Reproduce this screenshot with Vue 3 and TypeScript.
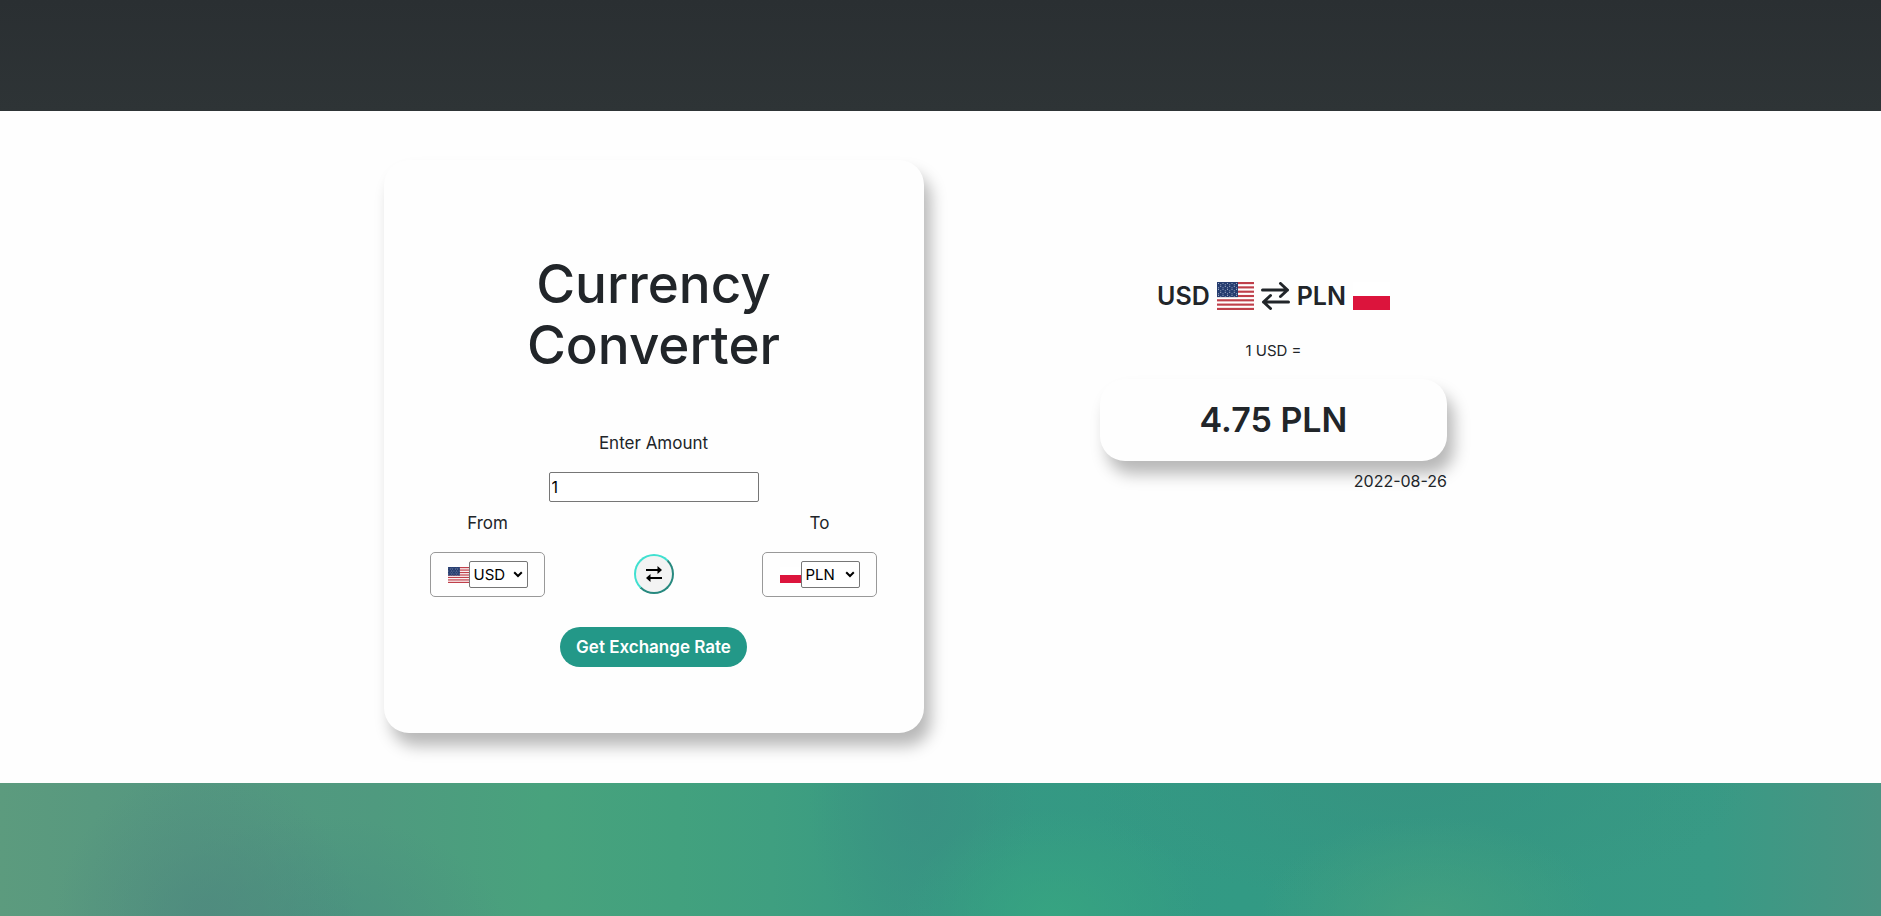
<script setup lang="ts">
import { computed, ref } from 'vue'

type Code = 'USD' | 'PLN'

const codes: Code[] = ['USD', 'PLN']
const rates: Record<Code, number> = { USD: 1, PLN: 4.75 }

const amount = ref('1')
const from = ref<Code>('USD')
const to = ref<Code>('PLN')
const result = ref('4.75 PLN')
const date = '2022-08-26'

const heading = computed(() => `${amount.value} ${from.value} =`)
const stripes = [0, 1, 2, 3, 4, 5, 6]
const stars = Array.from({ length: 45 }, (_, i) => ({
  x: 1.5 + (i % 9) * 2.25,
  y: 1.6 + Math.floor(i / 9) * 3 + (i % 2) * 1.2,
}))

function swap() {
  const previous = from.value
  from.value = to.value
  to.value = previous
}

function convert() {
  const value = (Number(amount.value) * rates[to.value]) / rates[from.value]
  result.value = `${value.toFixed(2)} ${to.value}`
}
</script>

<template>
  <svg class="defs" aria-hidden="true">
    <symbol id="flag-USD" viewBox="0 0 37 28" preserveAspectRatio="none">
      <rect width="37" height="28" fill="#fff" />
      <rect v-for="s in stripes" :key="s" width="37" height="2.15" :y="s * 4.31" fill="#bf3f4a" />
      <rect width="21" height="15.1" fill="#263d70" />
      <circle v-for="(s, i) in stars" :key="i" :cx="s.x" :cy="s.y" r="0.5" fill="#c3cbdd" />
    </symbol>
    <symbol id="flag-PLN" viewBox="0 0 37 28" preserveAspectRatio="none">
      <rect width="37" height="14" fill="#fff" />
      <rect width="37" height="14" y="14" fill="#dc143c" />
    </symbol>
  </svg>

  <div class="page">
    <header class="top"></header>

    <main class="main">
      <form class="card" @submit.prevent="convert">
        <h1>Currency Converter</h1>
        <label class="label" for="amount">Enter Amount</label>
        <input id="amount" v-model="amount" class="amount" type="text" inputmode="decimal" />

        <div class="row">
          <div class="side">
            <label class="label" for="from">From</label>
            <div class="picker">
              <svg class="flag"><use :href="`#flag-${from}`" /></svg>
              <span class="drop">
                <select id="from" v-model="from">
                  <option v-for="c in codes" :key="c">{{ c }}</option>
                </select>
                <svg class="chevron" viewBox="0 0 10 7"><path d="M1.2 1.3 5 5l3.800-3.700" /></svg>
              </span>
            </div>
          </div>

          <button class="swap" type="button" aria-label="Swap currencies" @click="swap">
            <svg viewBox="0 0 16 16">
              <path d="M0 3h11.500V0L16 4l-4.500 4V5H0zM16 11H4.500V8L0 12l4.500 4v-3H16z" />
            </svg>
          </button>

          <div class="side">
            <label class="label" for="to">To</label>
            <div class="picker">
              <svg class="flag"><use :href="`#flag-${to}`" /></svg>
              <span class="drop">
                <select id="to" v-model="to">
                  <option v-for="c in codes" :key="c">{{ c }}</option>
                </select>
                <svg class="chevron" viewBox="0 0 10 7"><path d="M1.2 1.3 5 5l3.800-3.700" /></svg>
              </span>
            </div>
          </div>
        </div>

        <button class="submit" type="submit">Get Exchange Rate</button>
      </form>

      <section class="result">
        <h2>
          <span>{{ from }}</span>
          <svg class="flag big"><use :href="`#flag-${from}`" /></svg>
          <svg class="arrows" viewBox="0 0 29 28">
            <path d="M1.500 8h25M19.500 1.500 26.500 8l-7 6.500M27.500 20h-25M9.500 13.500 2.500 20l7 6.500" />
          </svg>
          <span>{{ to }}</span>
          <svg class="flag big"><use :href="`#flag-${to}`" /></svg>
        </h2>
        <p class="unit">{{ heading }}</p>
        <output class="value">{{ result }}</output>
        <time class="date" :datetime="date">{{ date }}</time>
      </section>
    </main>

    <footer class="bottom"></footer>
  </div>
</template>

<style>
body {
  margin: 0;
  background: #fefefe;
}
</style>

<style scoped>
.defs {
  position: absolute;
  width: 0;
  height: 0;
}
.page {
  display: flex;
  flex-direction: column;
  min-height: 100vh;
  color: #212529;
  font: 400 16px/24px Inter, "Open Sans", sans-serif;
}
.top {
  height: 111px;
  background: linear-gradient(#2a2f32, #2e3436);
}
.main {
  display: flex;
  justify-content: center;
  align-items: flex-start;
  gap: 176px;
  padding: 49px 50px 50px 0;
}
.card {
  display: flex;
  flex-direction: column;
  align-items: center;
  box-sizing: border-box;
  width: 540px;
  padding: 94px 47px 66px 46px;
  border-radius: 25px;
  background: #fefefe;
  box-shadow: 7px 13px 16px rgba(0, 0, 0, 0.28);
}
h1 {
  width: 300px;
  margin: 0 0 55px;
  font-size: 53px;
  line-height: 61px;
  font-weight: 500;
  text-align: center;
}
.label {
  display: block;
  font-size: 17px;
  line-height: 24px;
}
.amount {
  box-sizing: border-box;
  width: 210px;
  height: 30px;
  margin: 17px 0 9px;
  padding: 1px 2px;
  border: 1px solid #767676;
  border-radius: 2px;
  background: #fff;
  color: #000;
  font: inherit;
}
.row {
  display: flex;
  justify-content: space-between;
  align-items: flex-end;
  align-self: stretch;
  margin-bottom: 30px;
}
.side {
  text-align: center;
}
.picker {
  display: flex;
  align-items: center;
  justify-content: center;
  box-sizing: border-box;
  width: 115px;
  height: 45px;
  margin-top: 17px;
  border: 1px solid #999;
  border-radius: 5px;
}
.flag {
  width: 21px;
  height: 16px;
}
.drop {
  display: flex;
  align-items: center;
  box-sizing: border-box;
  width: 59px;
  height: 27px;
  border: 1px solid #767676;
  border-radius: 2px;
  background: #fff;
}
select {
  flex: 1;
  min-width: 0;
  height: 25px;
  margin-right: -16px;
  padding: 0 16px 0 4px;
  border: 0;
  background: transparent;
  color: #000;
  font: inherit;
  font-size: 15px;
  appearance: none;
}
.chevron {
  flex: none;
  width: 10px;
  height: 7px;
  margin-right: 4px;
  fill: none;
  stroke: #000;
  stroke-width: 2;
  pointer-events: none;
}
.swap {
  display: flex;
  align-items: center;
  justify-content: center;
  box-sizing: border-box;
  width: 40px;
  height: 40px;
  margin-bottom: 3px;
  padding: 0;
  border: 2px solid;
  border-color: #40e0d0 #27897f #27897f #40e0d0;
  border-radius: 50%;
  background: #f3f3f3;
}
.swap svg {
  width: 16px;
  height: 16px;
}
.submit {
  height: 40px;
  padding: 0 16px;
  border: 0;
  border-radius: 20px;
  background: #239888;
  color: #fff;
  font: inherit;
  font-size: 17px;
  font-weight: 600;
}
.result {
  display: flex;
  flex-direction: column;
  align-items: center;
  width: 347px;
  padding-top: 119px;
}
h2 {
  display: flex;
  align-items: center;
  gap: 7px;
  margin: 0;
  font-size: 25px;
  line-height: 34px;
  font-weight: 600;
}
.big {
  width: 37px;
  height: 28px;
}
.arrows {
  width: 29px;
  height: 28px;
  fill: none;
  stroke: #212529;
  stroke-width: 3;
  stroke-linecap: round;
  stroke-linejoin: round;
}
.unit {
  margin: 26px 0 16px;
  font-size: 15px;
}
.value {
  align-self: stretch;
  padding: 19px 0;
  border-radius: 25px;
  background: #fefefe;
  box-shadow: 7px 13px 16px rgba(0, 0, 0, 0.28);
  font-size: 34px;
  line-height: 44px;
  font-weight: 600;
  text-align: center;
}
.date {
  align-self: flex-end;
  margin-top: 8px;
}
.bottom {
  flex: 1;
  min-height: 120px;
  background:
    radial-gradient(ellipse 8% 110% at 11% 100%, rgba(79, 137, 126, 0.8), transparent),
    radial-gradient(ellipse 10% 90% at 17% 115%, rgba(72, 144, 127, 0.8), transparent),
    radial-gradient(ellipse 8% 80% at 56% 100%, rgba(55, 165, 129, 0.9), transparent),
    radial-gradient(ellipse 9% 75% at 76% 100%, rgba(68, 160, 127, 0.9), transparent),
    radial-gradient(ellipse 6% 120% at 49% 15%, rgba(58, 144, 130, 0.85), transparent),
    radial-gradient(ellipse 18% 90% at 75% 0%, rgba(54, 147, 129, 0.9), transparent),
    linear-gradient(90deg, #5c9b7e 0%, #549780 10%, #4f9a7f 20%, #48a27d 29%, #42a17e 36%, #3f9f80 41%, #369883 50%, #329a84 66%, #359983 79%, #389a85 91%, #4b9482 100%);
}
</style>
